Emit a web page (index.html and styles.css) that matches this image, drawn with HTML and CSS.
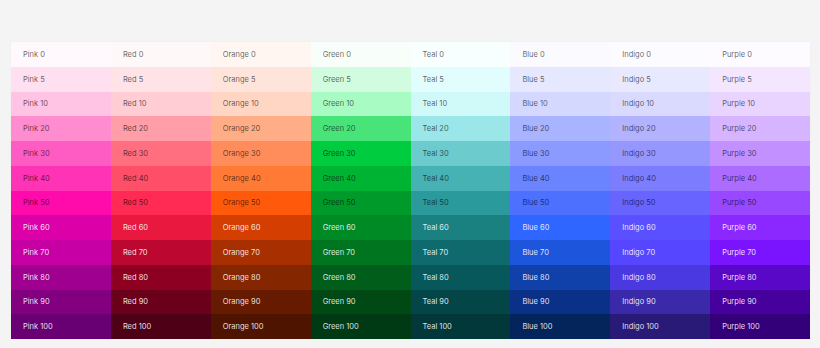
FILE: index.html
```html
<!DOCTYPE html>
<html>
<head>
<meta charset="utf-8">
<link rel="stylesheet" href="styles.css">
</head>
<body>
<div class="palette">
<div class="cell pink-0">Pink 0</div><div class="cell red-0">Red 0</div><div class="cell orange-0">Orange 0</div><div class="cell green-0">Green 0</div><div class="cell teal-0">Teal 0</div><div class="cell blue-0">Blue 0</div><div class="cell indigo-0">Indigo 0</div><div class="cell purple-0">Purple 0</div>
<div class="cell pink-5">Pink 5</div><div class="cell red-5">Red 5</div><div class="cell orange-5">Orange 5</div><div class="cell green-5">Green 5</div><div class="cell teal-5">Teal 5</div><div class="cell blue-5">Blue 5</div><div class="cell indigo-5">Indigo 5</div><div class="cell purple-5">Purple 5</div>
<div class="cell pink-10">Pink 10</div><div class="cell red-10">Red 10</div><div class="cell orange-10">Orange 10</div><div class="cell green-10">Green 10</div><div class="cell teal-10">Teal 10</div><div class="cell blue-10">Blue 10</div><div class="cell indigo-10">Indigo 10</div><div class="cell purple-10">Purple 10</div>
<div class="cell pink-20">Pink 20</div><div class="cell red-20">Red 20</div><div class="cell orange-20">Orange 20</div><div class="cell green-20">Green 20</div><div class="cell teal-20">Teal 20</div><div class="cell blue-20">Blue 20</div><div class="cell indigo-20">Indigo 20</div><div class="cell purple-20">Purple 20</div>
<div class="cell pink-30">Pink 30</div><div class="cell red-30">Red 30</div><div class="cell orange-30">Orange 30</div><div class="cell green-30">Green 30</div><div class="cell teal-30">Teal 30</div><div class="cell blue-30">Blue 30</div><div class="cell indigo-30">Indigo 30</div><div class="cell purple-30">Purple 30</div>
<div class="cell pink-40">Pink 40</div><div class="cell red-40">Red 40</div><div class="cell orange-40">Orange 40</div><div class="cell green-40">Green 40</div><div class="cell teal-40">Teal 40</div><div class="cell blue-40">Blue 40</div><div class="cell indigo-40">Indigo 40</div><div class="cell purple-40">Purple 40</div>
<div class="cell pink-50">Pink 50</div><div class="cell red-50">Red 50</div><div class="cell orange-50">Orange 50</div><div class="cell green-50">Green 50</div><div class="cell teal-50">Teal 50</div><div class="cell blue-50">Blue 50</div><div class="cell indigo-50">Indigo 50</div><div class="cell purple-50">Purple 50</div>
<div class="cell lt pink-60">Pink 60</div><div class="cell lt red-60">Red 60</div><div class="cell lt orange-60">Orange 60</div><div class="cell lt green-60">Green 60</div><div class="cell lt teal-60">Teal 60</div><div class="cell lt blue-60">Blue 60</div><div class="cell lt indigo-60">Indigo 60</div><div class="cell lt purple-60">Purple 60</div>
<div class="cell lt pink-70">Pink 70</div><div class="cell lt red-70">Red 70</div><div class="cell lt orange-70">Orange 70</div><div class="cell lt green-70">Green 70</div><div class="cell lt teal-70">Teal 70</div><div class="cell lt blue-70">Blue 70</div><div class="cell lt indigo-70">Indigo 70</div><div class="cell lt purple-70">Purple 70</div>
<div class="cell lt pink-80">Pink 80</div><div class="cell lt red-80">Red 80</div><div class="cell lt orange-80">Orange 80</div><div class="cell lt green-80">Green 80</div><div class="cell lt teal-80">Teal 80</div><div class="cell lt blue-80">Blue 80</div><div class="cell lt indigo-80">Indigo 80</div><div class="cell lt purple-80">Purple 80</div>
<div class="cell lt pink-90">Pink 90</div><div class="cell lt red-90">Red 90</div><div class="cell lt orange-90">Orange 90</div><div class="cell lt green-90">Green 90</div><div class="cell lt teal-90">Teal 90</div><div class="cell lt blue-90">Blue 90</div><div class="cell lt indigo-90">Indigo 90</div><div class="cell lt purple-90">Purple 90</div>
<div class="cell lt pink-100">Pink 100</div><div class="cell lt red-100">Red 100</div><div class="cell lt orange-100">Orange 100</div><div class="cell lt green-100">Green 100</div><div class="cell lt teal-100">Teal 100</div><div class="cell lt blue-100">Blue 100</div><div class="cell lt indigo-100">Indigo 100</div><div class="cell lt purple-100">Purple 100</div>
</div>
</body>
</html>
```
FILE: styles.css
```css
html, body {
  margin: 0;
  padding: 0;
  background: #f4f4f4;
}
body {
  padding: 42px 10px 9px 11px;
  font-family: Inter, "Noto Sans", sans-serif;
}
.palette {
  width: 799px;
  height: 297px;
  display: grid;
  grid-template-columns: repeat(8, 1fr);
  grid-template-rows: repeat(12, 1fr);
  box-shadow: 0 0 1px rgba(0,0,0,0.08);
}
.cell {
  display: flex;
  align-items: center;
  padding-left: 12px;
  font-size: 7.5px;
  color: rgba(0,0,0,0.62);
  letter-spacing: 0;
}
.cell.lt { color: rgba(255,255,255,0.88); }

.pink-0{background:#fff8fc}.pink-5{background:#ffe0f0}.pink-10{background:#ffc4e4}.pink-20{background:#ff8ccf}.pink-30{background:#ff5cc3}.pink-40{background:#ff33b5}.pink-50{background:#ff0aab}.pink-60{background:#dc00a8}.pink-70{background:#c600a4}.pink-80{background:#a0008f}.pink-90{background:#820080}.pink-100{background:#680074}
.red-0{background:#fff8f9}.red-5{background:#ffe3e6}.red-10{background:#ffcdd3}.red-20{background:#ff9ea8}.red-30{background:#ff6f80}.red-40{background:#ff4e68}.red-50{background:#ff2b54}.red-60{background:#e8183f}.red-70{background:#bc0830}.red-80{background:#8e0022}.red-90{background:#6a001a}.red-100{background:#4e0016}
.orange-0{background:#fff6f2}.orange-5{background:#ffe4dc}.orange-10{background:#ffd6c3}.orange-20{background:#ffad86}.orange-30{background:#ff8d5c}.orange-40{background:#ff7a35}.orange-50{background:#ff5a0c}.orange-60{background:#d43e00}.orange-70{background:#a83000}.orange-80{background:#842600}.orange-90{background:#661b00}.orange-100{background:#4e1400}
.green-0{background:#f8fffa}.green-5{background:#d2fce0}.green-10{background:#a8fcc3}.green-20{background:#48e47a}.green-30{background:#00cc40}.green-40{background:#00b433}.green-50{background:#009a2a}.green-60{background:#008a26}.green-70{background:#007520}.green-80{background:#005e1a}.green-90{background:#004814}.green-100{background:#003a14}
.teal-0{background:#f7ffff}.teal-5{background:#e2fdfd}.teal-10{background:#d0fafa}.teal-20{background:#9ae6e8}.teal-30{background:#6ccbcd}.teal-40{background:#46b2b4}.teal-50{background:#2a9a9c}.teal-60{background:#1a8080}.teal-70{background:#0e6a6c}.teal-80{background:#07585a}.teal-90{background:#044648}.teal-100{background:#02383a}
.blue-0{background:#fbfbff}.blue-5{background:#e6e8ff}.blue-10{background:#d4d8ff}.blue-20{background:#a8b4ff}.blue-30{background:#8a9aff}.blue-40{background:#6a84ff}.blue-50{background:#4d70ff}.blue-60{background:#2e66ff}.blue-70{background:#1e55dd}.blue-80{background:#1040aa}.blue-90{background:#0a3088}.blue-100{background:#04245c}
.indigo-0{background:#fcfbff}.indigo-5{background:#e8e8ff}.indigo-10{background:#dadaff}.indigo-20{background:#b2b2ff}.indigo-30{background:#9696ff}.indigo-40{background:#7c7cff}.indigo-50{background:#6864ff}.indigo-60{background:#5a50ff}.indigo-70{background:#5646ff}.indigo-80{background:#4a38e0}.indigo-90{background:#3a2aaa}.indigo-100{background:#2a1a78}
.purple-0{background:#fdfbff}.purple-5{background:#f4e6ff}.purple-10{background:#e8d4ff}.purple-20{background:#d6b4ff}.purple-30{background:#c290ff}.purple-40{background:#ac6cff}.purple-50{background:#9848ff}.purple-60{background:#8a28ff}.purple-70{background:#7a14ff}.purple-80{background:#5a08c8}.purple-90{background:#46009e}.purple-100{background:#34007a}
```
